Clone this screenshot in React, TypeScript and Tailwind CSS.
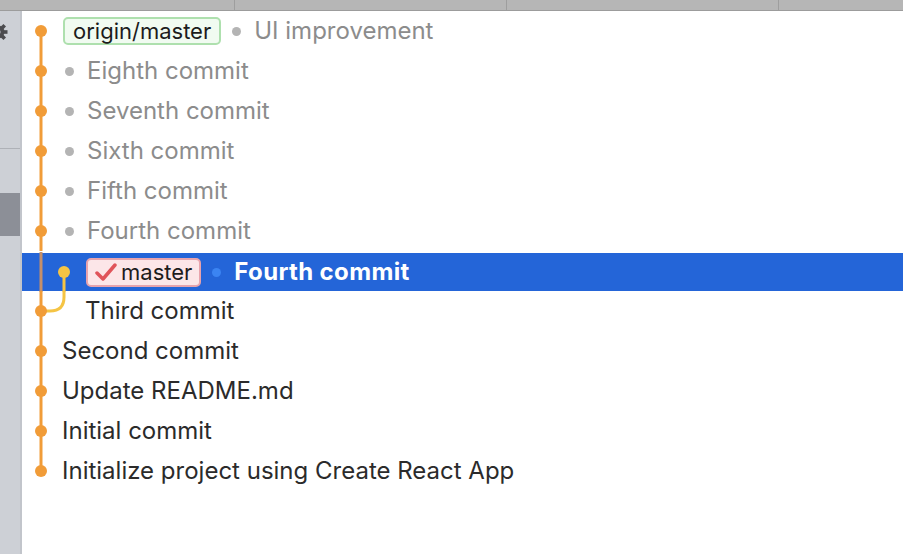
const ORANGE = '#f19c38';
const YELLOW = '#f5c444';

type Commit = {
  message: string;
  muted?: boolean;
  badge?: 'origin' | 'master';
  selected?: boolean;
  lanes: 1 | 2;
  kind?: 'first' | 'last' | 'branchTip' | 'merge';
};

const commits: Commit[] = [
  { message: 'UI improvement', muted: true, badge: 'origin', lanes: 1, kind: 'first' },
  { message: 'Eighth commit', muted: true, lanes: 1 },
  { message: 'Seventh commit', muted: true, lanes: 1 },
  { message: 'Sixth commit', muted: true, lanes: 1 },
  { message: 'Fifth commit', muted: true, lanes: 1 },
  { message: 'Fourth commit', muted: true, lanes: 1 },
  { message: 'Fourth commit', badge: 'master', selected: true, lanes: 2, kind: 'branchTip' },
  { message: 'Third commit', lanes: 2, kind: 'merge' },
  { message: 'Second commit', lanes: 1 },
  { message: 'Update README.md', lanes: 1 },
  { message: 'Initial commit', lanes: 1 },
  { message: 'Initialize project using Create React App', lanes: 1, kind: 'last' },
];

// gear cut off by the left edge of the window
function Gear() {
  return (
    <svg width={8} height={22} viewBox="0 0 8 22">
      <g transform="translate(-2 11)" fill="#4b4b4f">
        <circle r={6.5} />
        {[0, 45, 90, 135, 180, 225, 270, 315].map((a) => (
          <rect key={a} x={-1.8} y={-9.5} width={3.6} height={4} transform={`rotate(${a})`} />
        ))}
        <circle r={2.5} fill="#cdd0d6" />
      </g>
    </svg>
  );
}

function Graph({ commit }: { commit: Commit }) {
  const width = commit.lanes === 2 ? 63 : 40;
  const x = 19;

  if (commit.kind === 'branchTip') {
    // main lane passes straight through, branch tip sits in lane two
    return (
      <svg width={width} height={40} className="shrink-0">
        <line x1={x} y1={0} x2={x} y2={40} stroke="#c48f6a" strokeWidth={3} />
        <line x1={42} y1={20} x2={42} y2={40} stroke={YELLOW} strokeWidth={3} />
        <circle cx={42} cy={20} r={6} fill={YELLOW} />
      </svg>
    );
  }

  return (
    <svg width={width} height={40} className="shrink-0">
      <line
        x1={x}
        y1={commit.kind === 'first' ? 20 : 0}
        x2={x}
        y2={commit.kind === 'last' ? 20 : 40}
        stroke={ORANGE}
        strokeWidth={3}
      />
      {commit.kind === 'merge' && (
        <path d="M42 0 V6 Q42 20 28 20 H19" fill="none" stroke={YELLOW} strokeWidth={3} />
      )}
      <circle cx={x} cy={20} r={6} fill={ORANGE} />
    </svg>
  );
}

function Badge({ type }: { type: 'origin' | 'master' }) {
  if (type === 'origin') {
    return (
      <span className="flex h-[28px] items-center rounded-[5px] border-2 border-[#aee0ae] bg-[#f1fbf1] px-[8px] text-[22px] text-[#1c1c1c]">
        origin/master
      </span>
    );
  }
  return (
    <span className="flex h-[29px] items-center gap-[4px] rounded-[5px] border-2 border-[#e8a3ac] bg-[#fce6e8] pl-[7px] pr-[7px] text-[22px] text-[#1c1c1c]">
      <svg width={22} height={18} viewBox="0 0 22 18">
        <path
          d="M2 10 L8 16 L20 2"
          fill="none"
          stroke="#e0545a"
          strokeWidth={3.5}
          strokeLinecap="round"
          strokeLinejoin="round"
        />
      </svg>
      master
    </span>
  );
}

function Row({ commit }: { commit: Commit }) {
  return (
    <div
      className={`flex h-10 items-center ${commit.selected ? 'bg-[#2465d8] border-t-2 border-white' : ''}`}
    >
      <Graph commit={commit} />
      <div className="flex items-center">
        {commit.badge && (
          <span className="ml-[1px] mr-[11px]">
            <Badge type={commit.badge} />
          </span>
        )}
        {(commit.muted || commit.selected) && (
          <span
            className={`mr-[13px] h-[9px] w-[9px] rounded-full ${commit.badge ? '' : 'ml-[3px]'} ${commit.selected ? 'bg-[#3b84f2]' : 'bg-[#b4b4b4]'}`}
          />
        )}
        <span
          className={
            commit.selected
              ? 'font-bold tracking-[0.015em] text-white'
              : commit.muted
                ? 'text-[#8c8c8c]'
                : 'text-[#2b2b2b]'
          }
        >
          {commit.message}
        </span>
      </div>
    </div>
  );
}

export default function App() {
  return (
    <div className="flex h-[554px] w-[903px] flex-col overflow-hidden bg-white font-['Inter',sans-serif] text-[24px]">
      {/* column header strip */}
      <div className="flex h-[11px] shrink-0 border-b border-[#9c9c9c] bg-[#b6b6b6]">
        <div className="w-[235px] border-r border-[#9e9e9e]" />
        <div className="w-[272px] border-r border-[#9e9e9e]" />
        <div className="w-[272px] border-r border-[#9e9e9e]" />
        <div className="flex-1" />
      </div>
      <div className="flex flex-1">
        {/* sidebar */}
        <div className="flex w-[22px] shrink-0 flex-col border-r-2 border-[#c2c5cb] bg-[#cdd0d6]">
          <div className="mt-[10px] h-[22px]">
            <Gear />
          </div>
          <div className="mt-[105px] h-[1px] bg-[#aeb1b7]" />
          <div className="mt-[44px] h-[43px] bg-[#8c8f97]" />
        </div>
        {/* commit list */}
        <div className="flex-1">
          {commits.map((c, i) => (
            <Row key={i} commit={c} />
          ))}
        </div>
      </div>
    </div>
  );
}
